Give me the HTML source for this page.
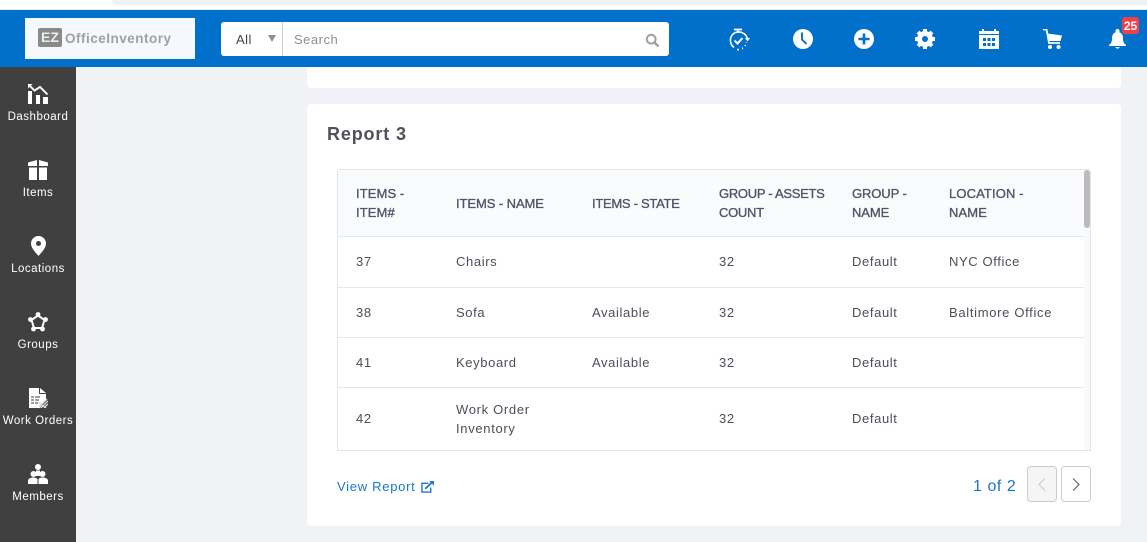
<!DOCTYPE html>
<html><head><meta charset="utf-8">
<style>
html,body{margin:0;padding:0}
body{width:1147px;height:542px;overflow:hidden;position:relative;background:#f1f2f6;font-family:"Liberation Sans",sans-serif;color:#4a4a4a}
div,span,a,svg{position:absolute}
.t{white-space:nowrap;font-size:13px;letter-spacing:.62px;line-height:19px;color:#4b4f58}
.h{white-space:nowrap;font-size:13px;letter-spacing:-.1px;line-height:19px;color:#4f5668;font-weight:400;-webkit-text-stroke:.35px #4f5668}
.l{left:0;width:76px;text-align:center;color:#fff;font-size:11.5px;letter-spacing:.5px;line-height:14px;white-space:nowrap}
.ln{left:338px;width:746px;height:1px;background:#e3e7ef}
</style></head><body>
<div style="left:0;top:0;width:1147px;height:10px;background:#fff"></div>
<div style="left:112px;top:0;width:1035px;height:5px;background:#f1f2f5;border-bottom-left-radius:8px"></div>
<div style="left:0;top:9px;width:1147px;height:1px;background:#e6e6e6"></div>

<div style="left:0;top:10px;width:1147px;height:57px;background:#0070cb"></div>
<div style="left:25px;top:18px;width:170px;height:41px;background:#f5f8fc"></div>
<div style="left:38px;top:28px;width:24px;height:19px;background:#8a8a8a;border-radius:2px;color:#eee;font-size:14px;font-weight:bold;line-height:19px;text-align:center">EZ</div>
<div style="left:65px;top:30px;color:#a0a0a0;font-size:13.5px;font-weight:bold;letter-spacing:.5px;line-height:17px;white-space:nowrap">OfficeInventory</div>

<div style="left:221px;top:22px;width:448px;height:34px;background:#fff;border-radius:3px"></div>
<div style="left:236px;top:31px;font-size:13px;letter-spacing:.5px;line-height:17px;color:#444">All</div>
<svg style="left:268px;top:35px" width="8" height="7"><path d="M0 0H8L4 7Z" fill="#8f8f8f"/></svg>
<div style="left:282px;top:22px;width:1px;height:34px;background:#ccc"></div>
<div style="left:294px;top:31px;font-size:13px;letter-spacing:.5px;line-height:17px;color:#8e8e8e">Search</div>
<svg style="left:645px;top:33px" width="15" height="15" viewBox="0 0 15 15"><circle cx="6.2" cy="6.2" r="4.4" fill="none" stroke="#a0a0a0" stroke-width="2"/><path d="M9.5 9.5L13.5 13.5" stroke="#a0a0a0" stroke-width="2.4"/></svg>

<svg style="left:727px;top:28px" width="24" height="24" viewBox="0 0 24 24" fill="none" stroke="#fff"><path d="M7 1.500H15M11 1.500V5" stroke-width="1.800"/><path d="M20.500 11A9 9 0 0 0 6 6 9 9 0 0 0 7 19.500" stroke-width="1.600"/><path d="M10 21.500L12 21.700M15 20.500L16 20M18 18L18.500 17M19.500 14.500V14" stroke-width="1.600"/><path d="M18 10H23L20.500 13.500Z" fill="#fff" stroke="none"/><path d="M7.500 12.500L10.500 15.500L15.500 10" stroke-width="2"/></svg>
<svg style="left:793px;top:29px" width="20" height="20" viewBox="0 0 20 20"><circle cx="10" cy="10" r="10" fill="#fff"/><path d="M9 3.500V10.500L13.500 15" fill="none" stroke="#0070cb" stroke-width="1.900"/></svg>
<svg style="left:854px;top:29px" width="20" height="20" viewBox="0 0 20 20"><circle cx="10" cy="10" r="10" fill="#fff"/><path d="M10 4.500V15.500M4.500 10H15.500" stroke="#0070cb" stroke-width="2.600"/></svg>
<svg style="left:915px;top:29px" width="20" height="20" viewBox="0 0 20 20"><circle cx="10" cy="10" r="5.500" fill="none" stroke="#fff" stroke-width="5"/><g stroke="#fff" stroke-width="4"><path d="M10 0V4M10 16V20M0 10H4M16 10H20M3 3L5.500 5.500M14.500 14.500L17 17M17 3L14.500 5.500M3 17L5.500 14.500"/></g></svg>
<svg style="left:979px;top:29px" width="20" height="20" viewBox="0 0 20 20"><path d="M0 2H3V0H5V2H15V0H17V2H20V5H0ZM0 6H20V20H0Z" fill="#fff"/><g fill="#0070cb"><rect x="4" y="9" width="3" height="3"/><rect x="8.500" y="9" width="3" height="3"/><rect x="13" y="9" width="3" height="3"/><rect x="4" y="14" width="3" height="3"/><rect x="8.500" y="14" width="3" height="3"/><rect x="13" y="14" width="3" height="3"/></g></svg>
<svg style="left:1043px;top:29px" width="20" height="20" viewBox="0 0 20 20"><path d="M0 .5H3.500L6 14H17" fill="none" stroke="#fff" stroke-width="1.800"/><path d="M4.500 4.500L19 6.500 17.500 12H6Z" fill="#fff"/><circle cx="7" cy="18" r="2" fill="#fff"/><circle cx="15.500" cy="18" r="2" fill="#fff"/></svg>
<svg style="left:1109px;top:29px" width="17" height="20" viewBox="0 0 17 20"><circle cx="8.500" cy="2" r="2" fill="#fff"/><path d="M8.500 3C4.500 3 3 6 3 9.500C3 13 2 14.500 0 16V17H17V16C15 14.500 14 13 14 9.500C14 6 12.500 3 8.500 3Z" fill="#fff"/><path d="M6 18H11L8.500 20Z" fill="#fff"/></svg>
<div style="left:1122px;top:17px;width:17px;height:17px;background:#f0404c;border-radius:3px;color:#fff;font-size:12px;font-weight:bold;line-height:18px;text-align:center">25</div>

<div style="left:0;top:67px;width:76px;height:475px;background:#404040"></div>
<svg style="left:28px;top:84px" width="20" height="20" viewBox="0 0 20 20" fill="#fff"><rect x="0" y="7" width="4" height="13"/><rect x="8" y="11" width="4" height="9"/><rect x="15" y="13" width="5" height="7"/><path d="M0 0H4.500L0 4.500Z"/><path d="M1.500 1.500L6.500 6.500 12 3 19.500 10.500" fill="none" stroke="#fff" stroke-width="1.900"/></svg>
<div class="l" style="top:110px">Dashboard</div>
<svg style="left:28px;top:160px" width="20" height="20" viewBox="0 0 20 20" fill="#fff"><path d="M0 2.500L9 0V6H0ZM11 0L20 2.500V6H11ZM1 7.500H9V20H1ZM11 7.500H19V20H11Z"/></svg>
<div class="l" style="top:186px">Items</div>
<svg style="left:31px;top:236px" width="15" height="20" viewBox="0 0 15 20"><path fill-rule="evenodd" d="M7.500 0A7.500 7.500 0 0 1 15 7.500C15 12 10 17 7.500 20 5 17 0 12 0 7.500A7.500 7.500 0 0 1 7.500 0ZM7.500 5A2.500 2.500 0 1 0 7.500 10 2.500 2.500 0 1 0 7.500 5Z" fill="#fff"/></svg>
<div class="l" style="top:262px">Locations</div>
<svg style="left:28px;top:312px" width="20" height="20" viewBox="0 0 20 20"><path d="M10 3.500L16.500 8 14 16H6L3.500 8Z" fill="none" stroke="#fff" stroke-width="2"/><g fill="#fff"><circle cx="10" cy="2.500" r="2.400"/><circle cx="17.500" cy="7.500" r="2.400"/><circle cx="14.500" cy="17" r="2.400"/><circle cx="5.500" cy="17" r="2.400"/><circle cx="2.500" cy="7.500" r="2.400"/></g></svg>
<div class="l" style="top:338px">Groups</div>
<svg style="left:29px;top:388px" width="19" height="20" viewBox="0 0 19 20"><path d="M0 0H10V6H17V11L11 20H0Z" fill="#fff"/><path d="M11 0L17 5H11Z" fill="#fff"/><path d="M2 9H5M6 9H11M2 12H5M6 12H10M2 15H5M6 15H9" stroke="#404040" stroke-width="1"/><path d="M10 19L18 11M12 20L19 13M9 14L17 20M15 20L19 16" stroke="#d8d8d8" stroke-width="1.300"/></svg>
<div class="l" style="top:414px">Work Orders</div>
<svg style="left:28px;top:464px" width="20" height="20" viewBox="0 0 20 20" fill="#fff"><circle cx="10" cy="3" r="3"/><path d="M8 6.500H12V12H8Z"/><circle cx="5.500" cy="10" r="3"/><circle cx="14.500" cy="10" r="3"/><path d="M0 20V17C0 14.500 2.500 13.500 5.500 13.500 7 13.500 8.500 14 9.500 15V20ZM10.500 20V15C11.500 14 13 13.500 14.500 13.500 17.500 13.500 20 14.500 20 17V20Z"/></svg>
<div class="l" style="top:490px">Members</div>

<div style="left:307px;top:67px;width:814px;height:21px;background:#fff;border-radius:0 0 4px 4px"></div>
<div style="left:307px;top:104px;width:814px;height:422px;background:#fff;border-radius:4px"></div>
<div style="left:327px;top:123px;font-size:18px;font-weight:bold;letter-spacing:.85px;line-height:22px;color:#50525a;white-space:nowrap">Report 3</div>

<div style="left:337px;top:169px;width:752px;height:280px;border:1px solid #e1e6ee;border-radius:3px 3px 0 0"></div>
<div style="left:338px;top:170px;width:746px;height:66px;background:#fafbfd"></div>
<div style="left:1084px;top:170px;width:6px;height:280px;background:#f8f9fc"></div>
<div style="left:1084px;top:170px;width:6px;height:58px;background:#bcbcbf;border-radius:3px"></div>
<div class="ln" style="top:236px"></div>
<div class="ln" style="top:287px"></div>
<div class="ln" style="top:337px"></div>
<div class="ln" style="top:387px"></div>

<div class="h" style="left:356px;top:184px;letter-spacing:.1px">ITEMS -<br>ITEM#</div>
<div class="h" style="left:456px;top:194px;letter-spacing:-.08px">ITEMS - NAME</div>
<div class="h" style="left:592px;top:194px;letter-spacing:-.28px">ITEMS - STATE</div>
<div class="h" style="left:719px;top:184px;letter-spacing:-.29px">GROUP - ASSETS<br>COUNT</div>
<div class="h" style="left:852px;top:184px;letter-spacing:-.1px">GROUP -<br>NAME</div>
<div class="h" style="left:949px;top:184px;letter-spacing:.12px">LOCATION -<br>NAME</div>

<div class="t" style="left:356px;top:252px">37</div>
<div class="t" style="left:456px;top:252px">Chairs</div>
<div class="t" style="left:719px;top:252px">32</div>
<div class="t" style="left:852px;top:252px">Default</div>
<div class="t" style="left:949px;top:252px">NYC Office</div>

<div class="t" style="left:356px;top:303px">38</div>
<div class="t" style="left:456px;top:303px">Sofa</div>
<div class="t" style="left:592px;top:303px">Available</div>
<div class="t" style="left:719px;top:303px">32</div>
<div class="t" style="left:852px;top:303px">Default</div>
<div class="t" style="left:949px;top:303px;letter-spacing:.68px">Baltimore Office</div>

<div class="t" style="left:356px;top:353px">41</div>
<div class="t" style="left:456px;top:353px">Keyboard</div>
<div class="t" style="left:592px;top:353px">Available</div>
<div class="t" style="left:719px;top:353px">32</div>
<div class="t" style="left:852px;top:353px">Default</div>

<div class="t" style="left:356px;top:409px">42</div>
<div class="t" style="left:456px;top:400px;letter-spacing:.68px">Work Order<br>Inventory</div>
<div class="t" style="left:719px;top:409px">32</div>
<div class="t" style="left:852px;top:409px">Default</div>

<div style="left:337px;top:477px;font-size:13px;letter-spacing:.72px;line-height:19px;color:#1a76c9;white-space:nowrap">View Report</div>
<svg style="left:421px;top:481px" width="13" height="12" viewBox="0 0 14 13" fill="none" stroke="#1a76c9"><path d="M8 2.500H1V12H10.500V7" stroke-width="1.500"/><path d="M4.500 8.500L12 1.500" stroke-width="2"/><path d="M9 0H14V5Z" fill="#1a76c9" stroke="none"/></svg>

<div style="left:973px;top:477px;font-size:16px;letter-spacing:.55px;line-height:20px;color:#1a76c9;white-space:nowrap">1 of 2</div>
<div style="left:1027px;top:466px;width:28px;height:34px;border:1px solid #ccc;border-radius:4px;background:#f5f5f5"></div>
<svg style="left:1037px;top:478px" width="10" height="13" viewBox="0 0 10 13"><path d="M8 .5L2 6.500 8 12.500" fill="none" stroke="#cfcfcf" stroke-width="1.200"/></svg>
<div style="left:1061px;top:466px;width:28px;height:34px;border:1px solid #ccc;border-radius:4px;background:#fff"></div>
<svg style="left:1071px;top:478px" width="10" height="13" viewBox="0 0 10 13"><path d="M2 .5L8 6.500 2 12.500" fill="none" stroke="#666" stroke-width="1.200"/></svg>
</body></html>
